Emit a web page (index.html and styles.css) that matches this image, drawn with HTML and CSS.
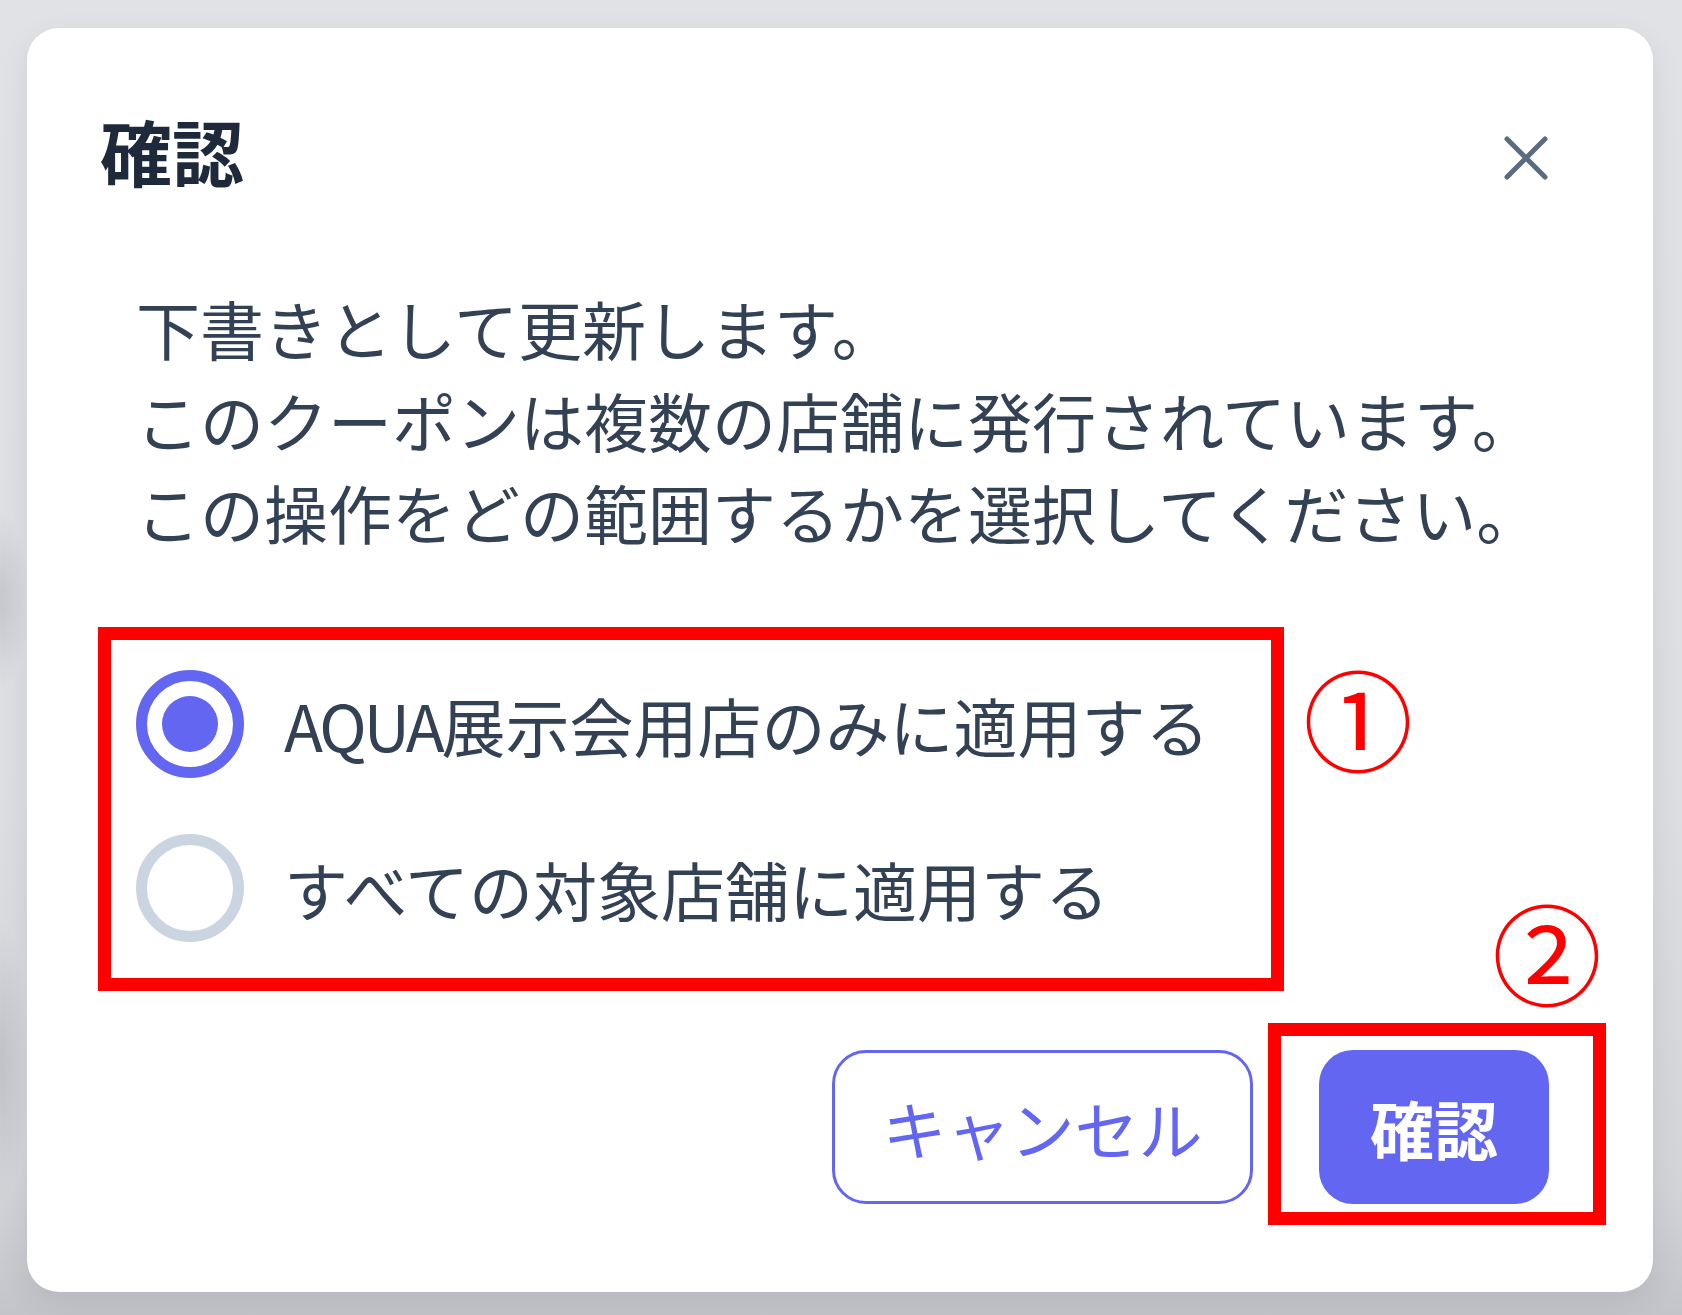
FILE: index.html
```html
<!DOCTYPE html>
<html lang="ja">
<head>
<meta charset="utf-8">
<title>確認</title>
<link rel="stylesheet" href="styles.css">
</head>
<body>
<div class="page">
  <div class="card">
    <div class="header">
      <h2 class="title">確認</h2>
      <button class="close" aria-label="閉じる">
        <svg viewBox="0 0 46 46" width="46" height="46"><path d="M4 4L42 42M42 4L4 42" fill="none" stroke="#5b6b80" stroke-width="5" stroke-linecap="round"/></svg>
      </button>
    </div>
    <div class="body">
      <p class="message">下書きとして更新します。<br>このクーポンは複数の店舗に発行されています。<br>この操作をどの範囲するかを選択してください。</p>
    </div>
    <div class="options">
      <label class="option"><span class="radio checked"><span class="dot"></span></span><span class="option-label"><span class="latin">AQUA</span>展示会用店のみに適用する</span></label>
      <label class="option"><span class="radio"></span><span class="option-label">すべての対象店舗に適用する</span></label>
    </div>
    <div class="footer">
      <button class="btn btn-cancel">キャンセル</button>
      <button class="btn btn-confirm">確認</button>
    </div>
  </div>
  <div class="annot annot-box1"></div>
  <div class="annot annot-box2"></div>
  <div class="annot annot-num1">①</div>
  <div class="annot annot-num2">②</div>
</div>
</body>
</html>
```
FILE: styles.css
```css
html, body {
  margin: 0;
  padding: 0;
}
body {
  width: 1682px;
  height: 1315px;
  overflow: hidden;
  font-family: "Noto Sans CJK JP", "Noto Sans", sans-serif;
  background:
    radial-gradient(ellipse 30px 90px at 0 600px, rgba(150, 152, 160, 0.35), rgba(150, 152, 160, 0) 100%),
    radial-gradient(ellipse 30px 140px at 0 1060px, rgba(150, 152, 160, 0.35), rgba(150, 152, 160, 0) 100%),
    linear-gradient(to bottom, #e0e2e5 0%, #dcdee2 60%, #d2d4d8 90%, #c3c4c9 100%);
}
.page {
  position: relative;
  width: 1682px;
  height: 1315px;
  padding: 28px 0 0 27px;
  box-sizing: border-box;
}
.card {
  width: 1626px;
  height: 1264px;
  box-sizing: border-box;
  background: #fff;
  border-radius: 32px;
  box-shadow: 0 10px 30px rgba(0, 0, 0, 0.08);
  display: flex;
  flex-direction: column;
  padding: 77px 0 88px 0;
}
.header {
  display: flex;
  align-items: center;
  justify-content: space-between;
  height: 90px;
  padding: 0 104px 0 73px;
}
.title {
  margin: 0;
  font-size: 72px;
  line-height: 90px;
  font-weight: 700;
  color: #1e293b;
}
.close {
  border: 0;
  background: none;
  padding: 0;
  margin-top: 15px;
  width: 46px;
  height: 46px;
  display: flex;
}
.body {
  margin-top: 86px;
  padding: 0 100px 0 109px;
}
.message {
  margin: 0;
  font-size: 64px;
  line-height: 92px;
  color: #334155;
  white-space: nowrap;
}
.options {
  margin-top: 113px;
  padding-left: 109px;
  display: flex;
  flex-direction: column;
  gap: 56px;
}
.option {
  display: flex;
  align-items: center;
  gap: 40px;
  height: 108px;
}
.radio {
  width: 108px;
  height: 108px;
  box-sizing: border-box;
  border-radius: 50%;
  border: 11px solid #cbd5e1;
  display: flex;
  align-items: center;
  justify-content: center;
  flex: none;
}
.radio.checked {
  border-color: #6366f1;
}
.dot {
  width: 56px;
  height: 56px;
  border-radius: 50%;
  background: #6366f1;
}
.option-label {
  font-size: 64px;
  line-height: 92px;
  color: #334155;
  white-space: nowrap;
}
.latin {
  letter-spacing: -3px;
}
.footer {
  margin-top: auto;
  display: flex;
  justify-content: flex-end;
  gap: 66px;
  padding-right: 104px;
}
.btn {
  height: 154px;
  box-sizing: border-box;
  border-radius: 34px;
  font-family: "Noto Sans CJK JP", "Noto Sans", sans-serif;
  font-size: 64px;
  line-height: 1;
  padding: 0;
  white-space: nowrap;
  display: flex;
  align-items: center;
  justify-content: center;
}
.btn-cancel {
  width: 421px;
  background: #fff;
  border: 3px solid #6366f1;
  color: #6366f1;
  font-weight: 400;
}
.btn-confirm {
  width: 230px;
  background: #6366f1;
  border: 0;
  color: #fff;
  font-weight: 700;
}
.annot {
  position: absolute;
}
.annot-box1 {
  left: 98px;
  top: 627px;
  width: 1186px;
  height: 364px;
  box-sizing: border-box;
  border: 13px solid #ff0000;
}
.annot-box2 {
  left: 1268px;
  top: 1023px;
  width: 338px;
  height: 202px;
  box-sizing: border-box;
  border: 13px solid #ff0000;
}
.annot-num1, .annot-num2 {
  width: 100px;
  height: 100px;
  display: flex;
  align-items: center;
  justify-content: center;
  font-size: 110px;
  line-height: 1;
  color: #ff0000;
}
.annot-num1 {
  left: 1308px;
  top: 666px;
}
.annot-num2 {
  left: 1497px;
  top: 900px;
}
```
